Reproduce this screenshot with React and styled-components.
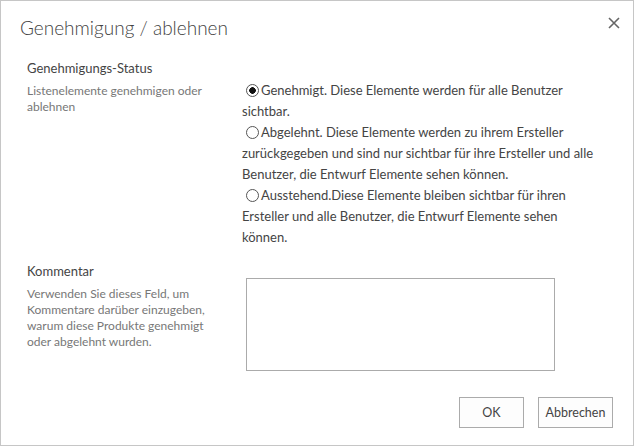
import styled, { createGlobalStyle } from "styled-components";

const GlobalStyle = createGlobalStyle`
  html, body {
    margin: 0;
    padding: 0;
    background: #ffffff;
  }
  body {
    font-family: Lato, "Open Sans", sans-serif;
    color: #444444;
  }
`;

const options = [
  {
    id: "approved",
    label: "Genehmigt. Diese Elemente werden für alle Benutzer sichtbar.",
    checked: true,
  },
  {
    id: "rejected",
    label:
      "Abgelehnt. Diese Elemente werden zu ihrem Ersteller zurückgegeben und sind nur sichtbar für ihre Ersteller und alle Benutzer, die Entwurf Elemente sehen können.",
  },
  {
    id: "pending",
    label:
      "Ausstehend.Diese Elemente bleiben sichtbar für ihren Ersteller und alle Benutzer, die Entwurf Elemente sehen können.",
  },
];

const App = () => {
  return (
    <>
      <GlobalStyle />
      <Dialog>
        <Header>
          <Title>Genehmigung / ablehnen</Title>
          <CloseButton aria-label="Schließen">
            <svg width="12" height="12" viewBox="0 0 12 12">
              <path d="M1 1L11 11M11 1L1 11" stroke="#666" strokeWidth="1.6" />
            </svg>
          </CloseButton>
        </Header>

        <Section>
          <Info>
            <Label>Genehmigungs-Status</Label>
            <Description>Listenelemente genehmigen oder ablehnen</Description>
          </Info>
          <Field $top={22}>
            {options.map((o) => (
              <Option key={o.id}>
                <Radio $checked={o.checked} />
                {o.label}
              </Option>
            ))}
          </Field>
        </Section>

        <Section $gap={13}>
          <Info>
            <Label>Kommentar</Label>
            <Description>
              Verwenden Sie dieses Feld, um Kommentare darüber einzugeben,
              warum diese Produkte genehmigt oder abgelehnt wurden.
            </Description>
          </Info>
          <Field $top={17}>
            <CommentBox />
          </Field>
        </Section>

        <Footer>
          <Button $width={65}>OK</Button>
          <Button $width={75}>Abbrechen</Button>
        </Footer>
      </Dialog>
    </>
  );
};

const Dialog = styled.div`
  box-sizing: border-box;
  width: 634px;
  height: 446px;
  border: 1px solid #c6c6c6;
  background: #ffffff;
  display: flex;
  flex-direction: column;
`;

const Header = styled.div`
  display: flex;
  justify-content: space-between;
  align-items: flex-start;
  padding: 13px 12px 0 19px;
  height: 44px;
`;

const Title = styled.h1`
  margin: 0;
  font-size: 19px;
  font-weight: 300;
  line-height: 28px;
  color: #444444;
`;

const CloseButton = styled.button`
  border: none;
  background: transparent;
  padding: 0;
  margin-top: 2px;
  width: 14px;
  height: 14px;
  display: flex;
  align-items: center;
  justify-content: center;
`;

const Section = styled.div`
  display: grid;
  grid-template-columns: 215px 358px;
  margin-top: ${(p) => p.$gap || 0}px;
  padding-left: 26px;
`;

const Info = styled.div`
  display: flex;
  flex-direction: column;
  gap: 5px;
`;

const Label = styled.div`
  font-size: 13px;
  line-height: 20px;
  color: #444444;
`;

const Description = styled.div`
  font-size: 12px;
  line-height: 16px;
  color: #777777;
  width: 180px;
`;

const Field = styled.div`
  padding-top: ${(p) => p.$top}px;
`;

const Option = styled.div`
  font-size: 13px;
  line-height: 21px;
  color: #444444;
`;

const Radio = styled.span`
  display: inline-block;
  box-sizing: border-box;
  width: 13px;
  height: 13px;
  margin: 0 2px 0 4px;
  vertical-align: -2px;
  border-radius: 50%;
  border: 1px solid #555555;
  background: ${(p) =>
    p.$checked
      ? "radial-gradient(circle, #111 0, #111 3px, #fff 3.6px)"
      : "#ffffff"};
`;

const CommentBox = styled.div`
  box-sizing: border-box;
  margin-left: 4px;
  width: 309px;
  height: 93px;
  border: 1px solid #ababab;
`;

const Footer = styled.div`
  display: flex;
  justify-content: flex-end;
  gap: 14px;
  margin-top: 26px;
  padding-right: 20px;
`;

const Button = styled.button`
  box-sizing: border-box;
  width: ${(p) => p.$width}px;
  height: 31px;
  border: 1px solid #ababab;
  background: #fdfdfd;
  font-family: Lato, "Open Sans", sans-serif;
  font-size: 12.5px;
  color: #444444;
  padding: 0;
`;

export default App;
